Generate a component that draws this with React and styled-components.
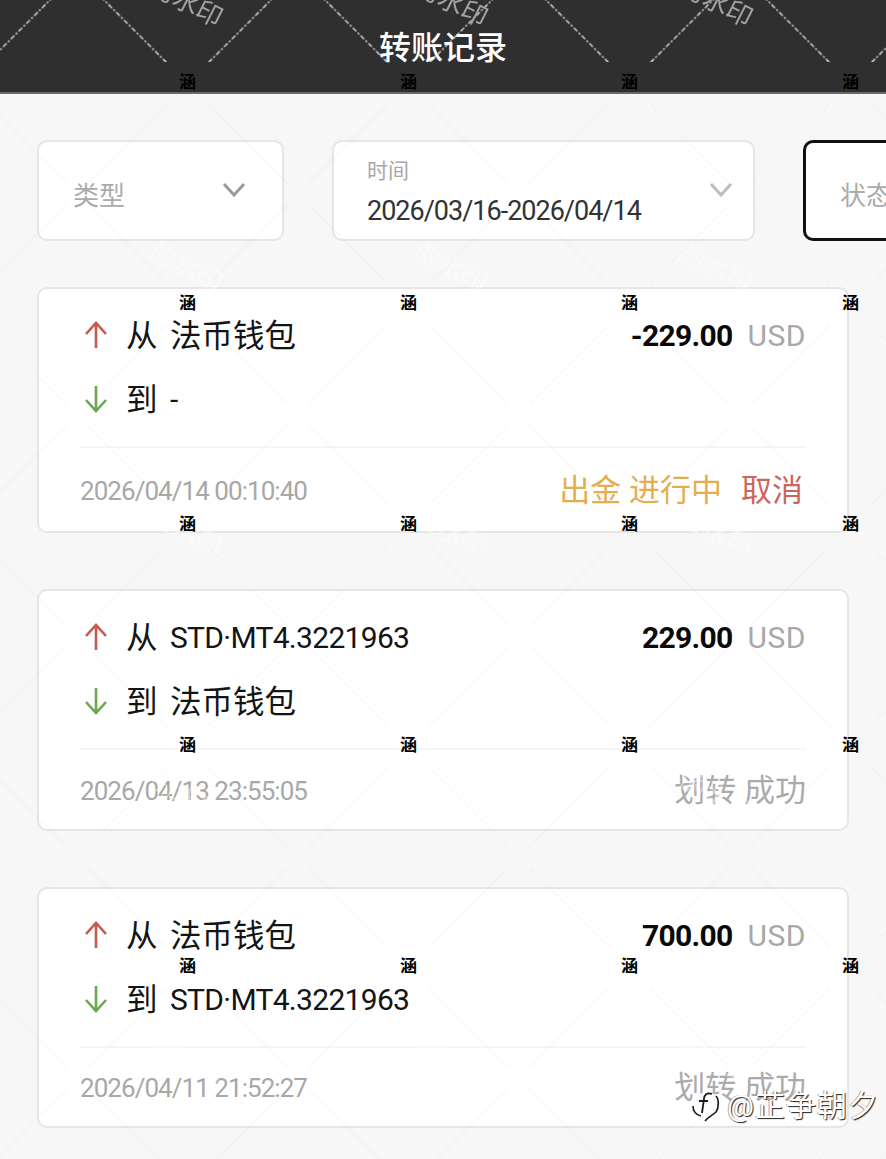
import styled, { createGlobalStyle } from "styled-components";

const GlobalStyle = createGlobalStyle`
  html, body {
    margin: 0;
    padding: 0;
    background: #f7f7f7;
  }
  body {
    font-family: Roboto, "Noto Sans CJK SC", sans-serif;
    overflow: hidden;
  }
`;

const Page = styled.div`
  position: relative;
  width: 886px;
  height: 1159px;
  overflow: hidden;
  background: #f7f7f7;
`;

const Header = styled.header`
  height: 92px;
  background: #2f2f2f;
  border-bottom: 2px solid #6a6a6a;
  display: flex;
  align-items: flex-start;
  justify-content: center;
`;

const Title = styled.h1`
  margin: 29px 0 0;
  font-size: 32px;
  line-height: 38px;
  font-weight: 500;
  color: #fff;
`;

const Filters = styled.div`
  display: flex;
  gap: 48px;
  padding: 46px 0 0 37px;
  height: 100px;
`;

const Chip = styled.div`
  flex: none;
  box-sizing: border-box;
  width: ${(p) => p.$width}px;
  height: 101px;
  background: #fff;
  border: ${(p) => (p.$active ? "3px solid #111" : "2px solid #e6e6e6")};
  border-radius: 10px;
  padding: ${(p) => (p.$stacked ? "14px 20px 0 33px" : "0 36px 0 33px")};
  display: flex;
  align-items: ${(p) => (p.$stacked ? "flex-start" : "center")};
  justify-content: space-between;
`;

const ChipLabel = styled.span`
  font-size: 26px;
  line-height: 34px;
  color: #ababab;
  margin: 11px 0 0 1px;
`;

const ChipSmall = styled.div`
  font-size: 21px;
  line-height: 30px;
  color: #a8a8a8;
`;

const ChipValue = styled.div`
  font-size: 27px;
  line-height: 34px;
  color: #333;
  margin-top: 8px;
  letter-spacing: -1px;
`;

const Chevron = styled.svg`
  flex: none;
  width: 24px;
  height: 16px;
  margin-top: ${(p) => p.$top}px;
  color: ${(p) => p.$color};
`;

const List = styled.div`
  display: flex;
  flex-direction: column;
  gap: 56px;
  padding: 47px 0 0 37px;
`;

const Card = styled.article`
  box-sizing: border-box;
  width: 812px;
  height: ${(p) => p.$height}px;
  background: #fff;
  border: 2px solid #e6e6e6;
  border-radius: 10px;
  padding: 26px 41px 0 41px;
`;

const Rows = styled.div`
  display: flex;
  justify-content: space-between;
  height: 131px;
  border-bottom: 2px solid #f6f6f6;
`;

const Route = styled.div`
  display: flex;
  flex-direction: column;
  gap: 24px;
`;

const RouteRow = styled.div`
  display: flex;
  align-items: center;
  height: 40px;
  color: #141414;
`;

const Arrow = styled.svg`
  flex: none;
  width: 26px;
  height: 30px;
  margin: 0 17px 0 3px;
  color: ${(p) => p.$color};
`;

const RouteWord = styled.span`
  width: 44px;
  font-size: 31.5px;
  margin-top: -4px;
`;

const RouteName = styled.span`
  font-size: ${(p) => (p.$latin ? "30px" : "31.5px")};
  letter-spacing: ${(p) => (p.$latin ? "-0.7px" : "0")};
  margin-top: ${(p) => (p.$latin ? "0" : "-4px")};
`;

const Amount = styled.div`
  display: flex;
  gap: 15px;
  height: 40px;
  align-items: center;
  font-size: 30px;
`;

const Value = styled.span`
  font-weight: 700;
  color: #0a0a0a;
  letter-spacing: -0.7px;
`;

const Currency = styled.span`
  color: #a8a8a8;
  letter-spacing: 0.5px;
`;

const Footer = styled.div`
  display: flex;
  justify-content: space-between;
  align-items: center;
  height: ${(p) => p.$height}px;
`;

const Time = styled.span`
  font-size: 26px;
  color: #a8a8a8;
  letter-spacing: -0.95px;
`;

const Status = styled.div`
  display: flex;
  gap: 19px;
  font-size: 31px;
  margin: -8px ${(p) => p.$inset}px 0 0;
`;

const StatusText = styled.span`
  color: ${(p) => p.$color};
`;

/* watermark layers on top of the page */
const MarkLayer = styled.svg`
  position: absolute;
  inset: 0;
  pointer-events: none;
`;

const StampGrid = styled.div`
  position: absolute;
  top: -30px;
  left: 77px;
  display: grid;
  grid-template-columns: repeat(4, 221px);
  grid-auto-rows: 221px;
  pointer-events: none;
`;

const Stamp = styled.span`
  display: flex;
  align-items: center;
  justify-content: center;
  font-size: 17px;
  font-weight: 700;
  color: #000;
`;

const Brand = styled.div`
  position: absolute;
  left: 692px;
  top: 1087px;
  display: flex;
  align-items: center;
  gap: 5px;
  pointer-events: none;
`;

const BrandName = styled.span`
  font-size: 30px;
  line-height: 38px;
  color: #fff;
  letter-spacing: 1px;
  text-shadow: 1px 1px 1px #222, -1px 0 0 rgba(0, 0, 0, 0.35);
`;

const ChevronIcon = (props) => (
  <Chevron viewBox="0 0 24 16" {...props}>
    <path d="M2 2l10 11L22 2" fill="none" stroke="currentColor" strokeWidth="3" />
  </Chevron>
);

const UpArrow = () => (
  <Arrow viewBox="0 0 26 30" $color="#c4594f">
    <path d="M13 28V4M3 14L13 3l10 11" fill="none" stroke="currentColor" strokeWidth="2.6" />
  </Arrow>
);

const DownArrow = () => (
  <Arrow viewBox="0 0 26 30" $color="#6aa850">
    <path d="M13 2v24M3 16l10 11 10-11" fill="none" stroke="currentColor" strokeWidth="2.6" />
  </Arrow>
);

const latin = (s) => /^[A-Z-]/.test(s);

const records = [
  {
    from: "法币钱包",
    to: "-",
    value: "-229.00",
    time: "2026/04/14 00:10:40",
    height: 246,
    footer: 86,
    inset: 3,
    status: [
      { text: "出金 进行中", color: "#e4ae50" },
      { text: "取消", color: "#c9665e" },
    ],
  },
  {
    from: "STD·MT4.3221963",
    to: "法币钱包",
    value: "229.00",
    time: "2026/04/13 23:55:05",
    height: 242,
    footer: 82,
    inset: 0,
    status: [{ text: "划转 成功", color: "#ababab" }],
  },
  {
    from: "法币钱包",
    to: "STD·MT4.3221963",
    value: "700.00",
    time: "2026/04/11 21:52:27",
    height: 241,
    footer: 80,
    inset: 0,
    status: [{ text: "划转 成功", color: "#ababab" }],
  },
];

const lattice = "M21 21L100 100M200 21L121 100M21 200L100 121M200 200L121 121";

const Watermark = () => (
  <MarkLayer width="886" height="1159">
    <defs>
      <pattern id="dark-lines" width="221" height="221" patternUnits="userSpaceOnUse" x="187.5" y="83.5">
        <path d={lattice} stroke="#fff" strokeWidth="1.2" strokeDasharray="5 2 2 2" fill="none" />
      </pattern>
      <pattern id="light-lines" width="221" height="221" patternUnits="userSpaceOnUse" x="187.5" y="83.5">
        <path d={lattice} stroke="#000" strokeOpacity="0.022" strokeWidth="1.4" fill="none" />
      </pattern>
      <pattern id="dark-text" width="265" height="265" patternUnits="userSpaceOnUse" x="50" y="-122">
        <text transform="translate(132 132) rotate(27)" textAnchor="middle" fontSize="26" fontFamily="'Noto Sans CJK SC'" fill="#a2a2a2">
          的水印
        </text>
      </pattern>
      <pattern id="light-text" width="265" height="265" patternUnits="userSpaceOnUse" x="50" y="-122">
        <text transform="translate(132 132) rotate(27)" textAnchor="middle" fontSize="26" fontFamily="'Noto Sans CJK SC'" fill="#fff" fillOpacity="0.4">
          的水印
        </text>
      </pattern>
    </defs>
    <rect width="886" height="62" fill="url(#dark-lines)" />
    <rect width="886" height="40" fill="url(#dark-text)" />
    <rect y="94" width="886" height="1065" fill="url(#light-lines)" />
    <rect y="94" width="886" height="1065" fill="url(#light-text)" />
  </MarkLayer>
);

const App = () => {
  return (
    <Page>
      <GlobalStyle />
      <Header>
        <Title>转账记录</Title>
      </Header>
      <Filters>
        <Chip $width={247}>
          <ChipLabel>类型</ChipLabel>
          <ChevronIcon $top={-2} $color="#9b9b9b" />
        </Chip>
        <Chip $width={423} $stacked>
          <div>
            <ChipSmall>时间</ChipSmall>
            <ChipValue>2026/03/16-2026/04/14</ChipValue>
          </div>
          <ChevronIcon $top={26} $color="#bcbcbc" />
        </Chip>
        <Chip $width={240} $active>
          <ChipLabel>状态</ChipLabel>
        </Chip>
      </Filters>
      <List>
        {records.map((r) => (
          <Card key={r.time} $height={r.height}>
            <Rows>
              <Route>
                <RouteRow>
                  <UpArrow />
                  <RouteWord>从</RouteWord>
                  <RouteName $latin={latin(r.from)}>{r.from}</RouteName>
                </RouteRow>
                <RouteRow>
                  <DownArrow />
                  <RouteWord>到</RouteWord>
                  <RouteName $latin={latin(r.to)}>{r.to}</RouteName>
                </RouteRow>
              </Route>
              <Amount>
                <Value>{r.value}</Value>
                <Currency>USD</Currency>
              </Amount>
            </Rows>
            <Footer $height={r.footer}>
              <Time>{r.time}</Time>
              <Status $inset={r.inset}>
                {r.status.map((s) => (
                  <StatusText key={s.text} $color={s.color}>
                    {s.text}
                  </StatusText>
                ))}
              </Status>
            </Footer>
          </Card>
        ))}
      </List>
      <Watermark />
      <StampGrid>
        {Array.from({ length: 20 }, (_, i) => (
          <Stamp key={i}>涵</Stamp>
        ))}
      </StampGrid>
      <Brand>
        <svg width="30" height="36" viewBox="0 0 30 36" fill="none">
          <path d="M15 4c8 0 13 6 12 13-1 8-7 11-12 17-1-3-3-5-6-6C4 26 1 22 1 17 2 9 8 4 15 4z" fill="#fff" fillOpacity="0.85" />
          <path d="M1 18c0 5 3 9 8 10M24 8c3 3 3 12 0 16-3 3-8 5-11 9" stroke="#1c1c1c" strokeWidth="1.7" />
          <path d="M20 6c-5-2-8 1-8 5l-2 14M7 13h9" stroke="#1c1c1c" strokeWidth="1.8" />
        </svg>
        <BrandName>@芷争朝夕</BrandName>
      </Brand>
    </Page>
  );
};

export default App;
